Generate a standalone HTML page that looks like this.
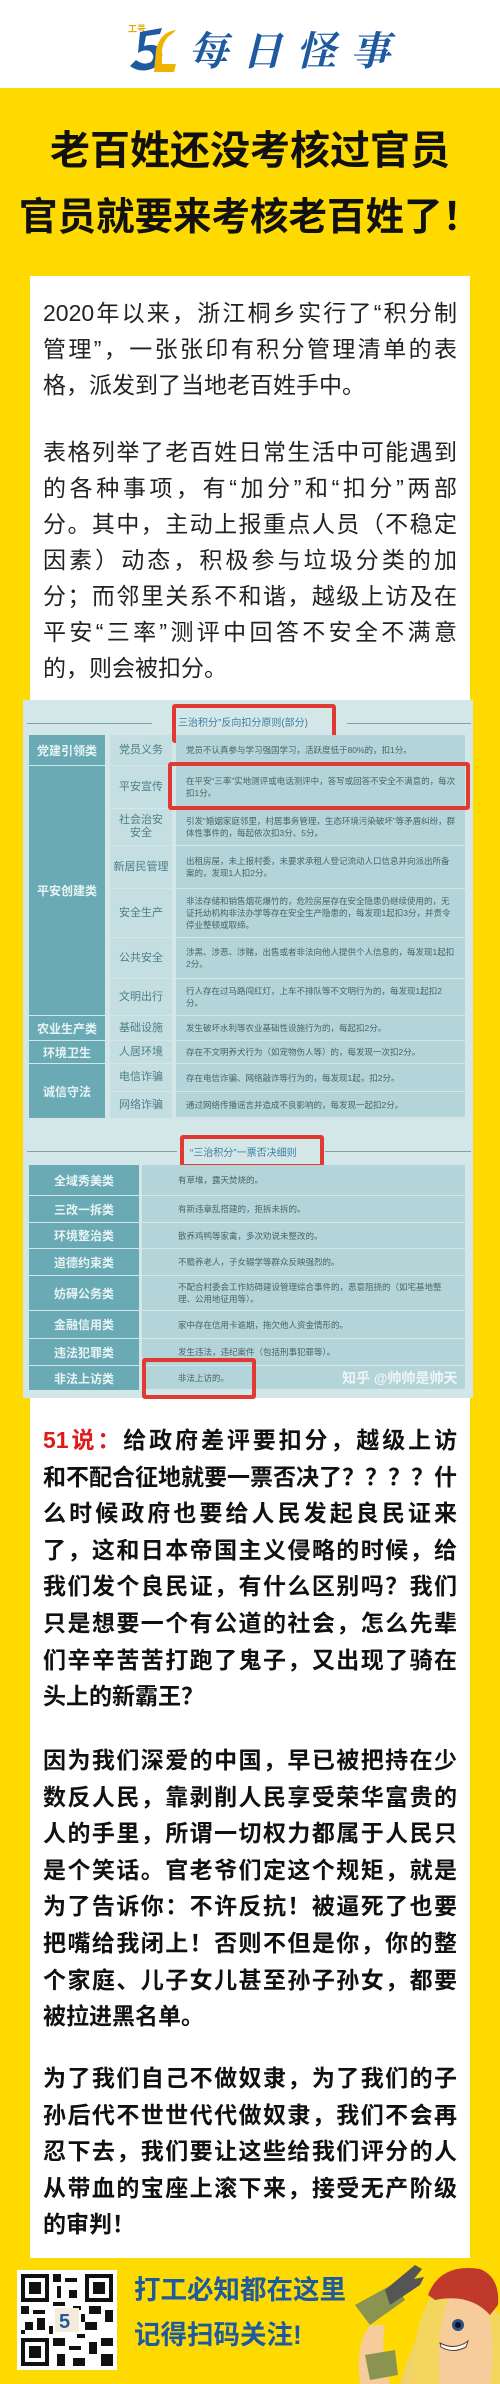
<!DOCTYPE html>
<html><head><meta charset="utf-8">
<style>
*{margin:0;padding:0;box-sizing:border-box}
body{width:500px;height:2384px;position:relative;background:#FFDA00;font-family:"Liberation Sans","Noto Sans CJK SC",sans-serif;overflow:hidden}
.abs{position:absolute}
.hdr{left:0;top:0;width:500px;height:88px;background:#fff}
.card{left:30px;top:276px;width:440px;height:1982px;background:#fff}
.p{position:absolute;left:43px;width:414px;font-size:23px;color:#222}
.p div{height:36px;line-height:36px;white-space:nowrap;text-align:justify;text-align-last:justify}
.p div.e{text-align:left;text-align-last:left}
.b{font-weight:bold;color:#111}
.b div{height:36.6px;line-height:36.6px}
.t{position:absolute;font-size:9px;color:#4d6a70;line-height:12px;overflow:hidden}
.lc{position:absolute;background:#6aaab4;color:#e8f4f5;font-weight:bold;font-size:12px;display:flex;align-items:center;justify-content:center}
.mc{position:absolute;background:#c4dee1;color:#4d7f88;font-size:11px;display:flex;align-items:center;justify-content:center;text-align:center;line-height:13px}
.rc{position:absolute;background:#b3d4d8;border-bottom:1px solid #d3e6e8}
.rc span{position:absolute;left:10px;right:8px;top:50%;transform:translateY(-50%);font-size:8.5px;color:#4a6469;line-height:12px}
.red{position:absolute;border:4px solid #e03a32;border-radius:3px}
</style></head><body>
<div class="abs hdr"></div>
<!-- logo -->
<svg class="abs" style="left:126px;top:20px" width="56" height="56" viewBox="0 0 56 56">
<text x="2" y="12" font-size="9" font-family="Liberation Sans,Noto Sans CJK SC,sans-serif" fill="#e8a800" font-weight="bold">工号</text>
<path d="M14 12 L36 8 L34 14 L20 16 L18 26 Q32 22 36 32 Q38 46 22 50 Q12 52 4 46 L10 40 Q18 46 25 42 Q30 36 24 31 Q18 29 12 33 Z" fill="#1d5aa0"/>
<path d="M30 30 Q34 12 50 10 L46 14 Q38 18 36 30 L36 44 L50 44 L48 52 L28 52 Z" fill="#f0b400"/>
</svg>
<div class="abs" style="left:188px;top:24px;font-size:40px;font-weight:bold;font-style:italic;color:#1d5aa0;letter-spacing:14px;line-height:50px;font-family:'Noto Serif CJK SC','Noto Sans CJK SC',sans-serif">每日怪事</div>
<!-- title -->
<div class="abs" style="left:0;top:128px;width:500px;text-align:center;font-size:40px;font-weight:bold;line-height:46px;color:#111;letter-spacing:0px">老百姓还没考核过官员</div>
<div class="abs" style="left:0;top:195px;width:500px;text-align:center;font-size:38.5px;font-weight:bold;line-height:46px;color:#111">官员就要来考核老百姓了！</div>
<div class="abs card"></div>
<div class="p" style="top:295px">
<div>2020年以来，浙江桐乡实行了“积分制</div>
<div>管理”，一张张印有积分管理清单的表</div>
<div class="e">格，派发到了当地老百姓手中。</div>
</div>
<div class="p" style="top:434px">
<div>表格列举了老百姓日常生活中可能遇到</div>
<div>的各种事项，有“加分”和“扣分”两部</div>
<div>分。其中，主动上报重点人员（不稳定</div>
<div>因素）动态，积极参与垃圾分类的加</div>
<div>分；而邻里关系不和谐，越级上访及在</div>
<div>平安“三率”测评中回答不安全不满意</div>
<div class="e">的，则会被扣分。</div>
</div>
<!-- table image -->
<div class="abs" style="left:23px;top:700px;width:450px;height:698px;background:#d3e7e9"></div>
<div class="abs" style="left:27px;top:723px;width:125px;height:1px;background:#7fa5ab"></div>
<div class="abs" style="left:347px;top:723px;width:124px;height:1px;background:#7fa5ab"></div>
<div class="abs" style="left:178px;top:714px;font-size:10px;color:#3d7fa0">三治积分”反向扣分原则(部分)</div>
<div class="red" style="left:172px;top:704px;width:164px;height:39px"></div>
<div class="lc" style="left:29px;top:735px;width:76px;height:30px">党建引领类</div>
<div class="lc" style="left:29px;top:766px;width:76px;height:249px">平安创建类</div>
<div class="lc" style="left:29px;top:1016px;width:76px;height:24px">农业生产类</div>
<div class="lc" style="left:29px;top:1041px;width:76px;height:22px">环境卫生</div>
<div class="lc" style="left:29px;top:1064px;width:76px;height:54px">诚信守法</div>
<div class="mc" style="left:110px;top:735px;width:62px;height:30px">党员义务</div>
<div class="mc" style="left:110px;top:766px;width:62px;height:42px">平安宣传</div>
<div class="mc" style="left:110px;top:809px;width:62px;height:36px">社会治安<br>安全</div>
<div class="mc" style="left:110px;top:846px;width:62px;height:42px">新居民管理</div>
<div class="mc" style="left:110px;top:889px;width:62px;height:48px">安全生产</div>
<div class="mc" style="left:110px;top:938px;width:62px;height:40px">公共安全</div>
<div class="mc" style="left:110px;top:979px;width:62px;height:36px">文明出行</div>
<div class="mc" style="left:110px;top:1016px;width:62px;height:24px">基础设施</div>
<div class="mc" style="left:110px;top:1041px;width:62px;height:22px">人居环境</div>
<div class="mc" style="left:110px;top:1064px;width:62px;height:27px">电信诈骗</div>
<div class="mc" style="left:110px;top:1092px;width:62px;height:26px">网络诈骗</div>
<div class="rc" style="left:176px;top:735px;width:289px;height:31px"><span>党员不认真参与学习强国学习，活跃度低于80%的，扣1分。</span></div>
<div class="rc" style="left:176px;top:766px;width:289px;height:43px"><span>在平安“三率”实地测评或电话测评中，答写或回答不安全不满意的，每次扣1分。</span></div>
<div class="rc" style="left:176px;top:809px;width:289px;height:37px"><span>引发“婚姻家庭邻里，村居事务管理，生态环境污染破坏”等矛盾纠纷，群体性事件的，每起依次扣3分、5分。</span></div>
<div class="rc" style="left:176px;top:846px;width:289px;height:43px"><span>出租房屋，未上报村委，未要求承租人登记流动人口信息并向派出所备案的，发现1人扣2分。</span></div>
<div class="rc" style="left:176px;top:889px;width:289px;height:49px"><span>非法存储和销售烟花爆竹的，危险房屋存在安全隐患仍继续使用的，无证托幼机构非法办学等存在安全生产隐患的，每发现1起扣3分，并责令停业整顿或取缔。</span></div>
<div class="rc" style="left:176px;top:938px;width:289px;height:41px"><span>涉黑、涉恶、涉赌，出售或者非法向他人提供个人信息的，每发现1起扣2分。</span></div>
<div class="rc" style="left:176px;top:979px;width:289px;height:37px"><span>行人存在过马路闯红灯，上车不排队等不文明行为的，每发现1起扣2分。</span></div>
<div class="rc" style="left:176px;top:1016px;width:289px;height:25px"><span>发生破坏水利等农业基础性设施行为的，每起扣2分。</span></div>
<div class="rc" style="left:176px;top:1041px;width:289px;height:23px"><span>存在不文明养犬行为（如宠物伤人等）的，每发现一次扣2分。</span></div>
<div class="rc" style="left:176px;top:1064px;width:289px;height:28px"><span>存在电信诈骗、网络敲诈等行为的，每发现1起，扣2分。</span></div>
<div class="rc" style="left:176px;top:1092px;width:289px;height:26px"><span>通过网络传播谣言并造成不良影响的，每发现一起扣2分。</span></div>
<div class="red" style="left:168px;top:762px;width:302px;height:48px"></div>
<!-- section 2 -->
<div class="abs" style="left:27px;top:1151px;width:150px;height:1px;background:#7fa5ab"></div>
<div class="abs" style="left:325px;top:1151px;width:146px;height:1px;background:#7fa5ab"></div>
<div class="abs" style="left:190px;top:1144px;font-size:10px;color:#3d7fa0">“三治积分”一票否决细则</div>
<div class="red" style="left:180px;top:1135px;width:144px;height:33px"></div>
<div class="lc" style="left:29px;top:1165px;width:110px;height:30px">全域秀美类</div>
<div class="lc" style="left:29px;top:1196px;width:110px;height:26px">三改一拆类</div>
<div class="lc" style="left:29px;top:1223px;width:110px;height:25px">环境整治类</div>
<div class="lc" style="left:29px;top:1249px;width:110px;height:26px">道德约束类</div>
<div class="lc" style="left:29px;top:1276px;width:110px;height:34px">妨碍公务类</div>
<div class="lc" style="left:29px;top:1311px;width:110px;height:27px">金融信用类</div>
<div class="lc" style="left:29px;top:1339px;width:110px;height:26px">违法犯罪类</div>
<div class="lc" style="left:29px;top:1366px;width:110px;height:24px">非法上访类</div>
<div class="rc" style="left:142px;top:1165px;width:323px;height:31px"><span style="left:36px">有草堆，露天焚烧的。</span></div>
<div class="rc" style="left:142px;top:1196px;width:323px;height:27px"><span style="left:36px">有新违章乱搭建的，拒拆未拆的。</span></div>
<div class="rc" style="left:142px;top:1223px;width:323px;height:26px"><span style="left:36px">散养鸡鸭等家禽，多次劝说未整改的。</span></div>
<div class="rc" style="left:142px;top:1249px;width:323px;height:27px"><span style="left:36px">不赡养老人，子女辍学等群众反映强烈的。</span></div>
<div class="rc" style="left:142px;top:1276px;width:323px;height:35px"><span style="left:36px">不配合村委会工作妨碍建设管理综合事件的，恶意阻挠的（如宅基地整理、公用地征用等）。</span></div>
<div class="rc" style="left:142px;top:1311px;width:323px;height:28px"><span style="left:36px">家中存在信用卡逾期，拖欠他人资金情形的。</span></div>
<div class="rc" style="left:142px;top:1339px;width:323px;height:27px"><span style="left:36px">发生违法，违纪案件（包括刑事犯罪等）。</span></div>
<div class="rc" style="left:142px;top:1366px;width:323px;height:24px"><span style="left:36px">非法上访的。</span></div>
<div class="abs" style="left:342px;top:1368px;font-size:14px;color:#eef6f7;font-weight:bold;white-space:nowrap">知乎 @帅帅是帅天</div>
<div class="red" style="left:142px;top:1358px;width:114px;height:41px"></div>
<!-- opinion -->
<div class="p b" style="top:1422px">
<div><span style="color:#e01a1a">51说：</span>给政府差评要扣分，越级上访</div>
<div>和不配合征地就要一票否决了？？？？什</div>
<div>么时候政府也要给人民发起良民证来</div>
<div>了，这和日本帝国主义侵略的时候，给</div>
<div>我们发个良民证，有什么区别吗？我们</div>
<div>只是想要一个有公道的社会，怎么先辈</div>
<div>们辛辛苦苦打跑了鬼子，又出现了骑在</div>
<div class="e">头上的新霸王？</div>
</div>
<div class="p b" style="top:1742px">
<div>因为我们深爱的中国，早已被把持在少</div>
<div>数反人民，靠剥削人民享受荣华富贵的</div>
<div>人的手里，所谓一切权力都属于人民只</div>
<div>是个笑话。官老爷们定这个规矩，就是</div>
<div>为了告诉你：不许反抗！被逼死了也要</div>
<div>把嘴给我闭上！否则不但是你，你的整</div>
<div>个家庭、儿子女儿甚至孙子孙女，都要</div>
<div class="e">被拉进黑名单。</div>
</div>
<div class="p b" style="top:2060px">
<div>为了我们自己不做奴隶，为了我们的子</div>
<div>孙后代不世世代代做奴隶，我们不会再</div>
<div>忍下去，我们要让这些给我们评分的人</div>
<div>从带血的宝座上滚下来，接受无产阶级</div>
<div class="e">的审判！</div>
</div>
<!-- footer -->
<svg class="abs" style="left:17px;top:2270px" width="100" height="100" viewBox="0 0 25 25">
<rect width="25" height="25" fill="#fff"/>
<g fill="#111">
<rect x="1" y="1" width="7" height="7"/><rect x="17" y="1" width="7" height="7"/><rect x="1" y="17" width="7" height="7"/>
</g>
<g fill="#fff"><rect x="2" y="2" width="5" height="5"/><rect x="18" y="2" width="5" height="5"/><rect x="2" y="18" width="5" height="5"/></g>
<g fill="#111"><rect x="3" y="3" width="3" height="3"/><rect x="19" y="3" width="3" height="3"/><rect x="3" y="19" width="3" height="3"/>
<path d="M9 1h2v2h-2zM12 2h3v1h-3zM10 4h1v3h-1zM13 5h2v2h-2zM9 8h3v1h-3zM1 9h2v2h-2zM4 10h3v1h-3zM14 9h2v1h-2zM18 9h3v2h-3zM22 10h2v3h-2zM2 13h2v2h-2zM5 12h2v3h-2zM17 13h3v2h-3zM15 16h2v1h-2zM9 17h3v2h-3zM13 19h3v1h-3zM18 18h2v3h-2zM21 17h3v2h-3zM10 21h2v3h-2zM14 22h3v2h-3zM21 21h3v3h-3zM1 15h1v1h-1zM8 14h1v2h-1zM16 11h1v2h-1z"/></g>
<rect x="9.5" y="9.5" width="6" height="6" fill="#f4ecd8"/>
<text x="10.5" y="14.5" font-size="5" fill="#1d5aa0" font-weight="bold" font-family="Liberation Sans">5</text>
</svg>
<div class="abs" style="left:134px;top:2270px;font-size:26.5px;font-weight:bold;color:#1d5a9e;line-height:40px;white-space:nowrap">打工必知都在这里</div>
<div class="abs" style="left:134px;top:2315px;font-size:26.5px;font-weight:bold;color:#1d5a9e;line-height:40px;white-space:nowrap">记得扫码关注!</div>
<svg class="abs" style="left:340px;top:2255px" width="160" height="129" viewBox="0 0 160 129">
<path d="M60 129 Q70 90 90 60 L140 60 L160 100 L160 129 Z" fill="#f2d16a"/>
<path d="M85 129 Q80 70 100 40 L145 40 Q160 70 150 129 Z" fill="#f6cd9a"/>
<path d="M75 129 Q70 70 95 35 L110 40 Q95 80 100 129 Z" fill="#f3d65e"/>
<path d="M140 40 Q158 70 150 129 L160 129 L160 60 Z" fill="#f3d65e"/>
<path d="M88 40 Q100 8 140 14 Q160 22 158 50 L150 60 Q130 38 95 45 Z" fill="#c0392b"/>
<circle cx="118" cy="70" r="6" fill="#2a4f8a"/><circle cx="118" cy="70" r="3" fill="#111"/>
<path d="M100 88 Q115 96 128 86 L126 92 Q113 99 101 92 Z" fill="#fff" stroke="#5a3a2a"/>
<path d="M20 129 Q15 90 30 70 L45 70 Q40 95 50 129 Z" fill="#f6cd9a"/>
<path d="M15 50 L55 28 L65 45 L30 70 Z" fill="#8a9450"/>
<path d="M45 35 L75 10 L82 14 L74 24 L84 22 L80 30 L50 50 Z" fill="#555"/>
<path d="M25 100 L55 95 L58 120 L30 125 Z" fill="#8a9450"/>
</svg>
</body></html>
